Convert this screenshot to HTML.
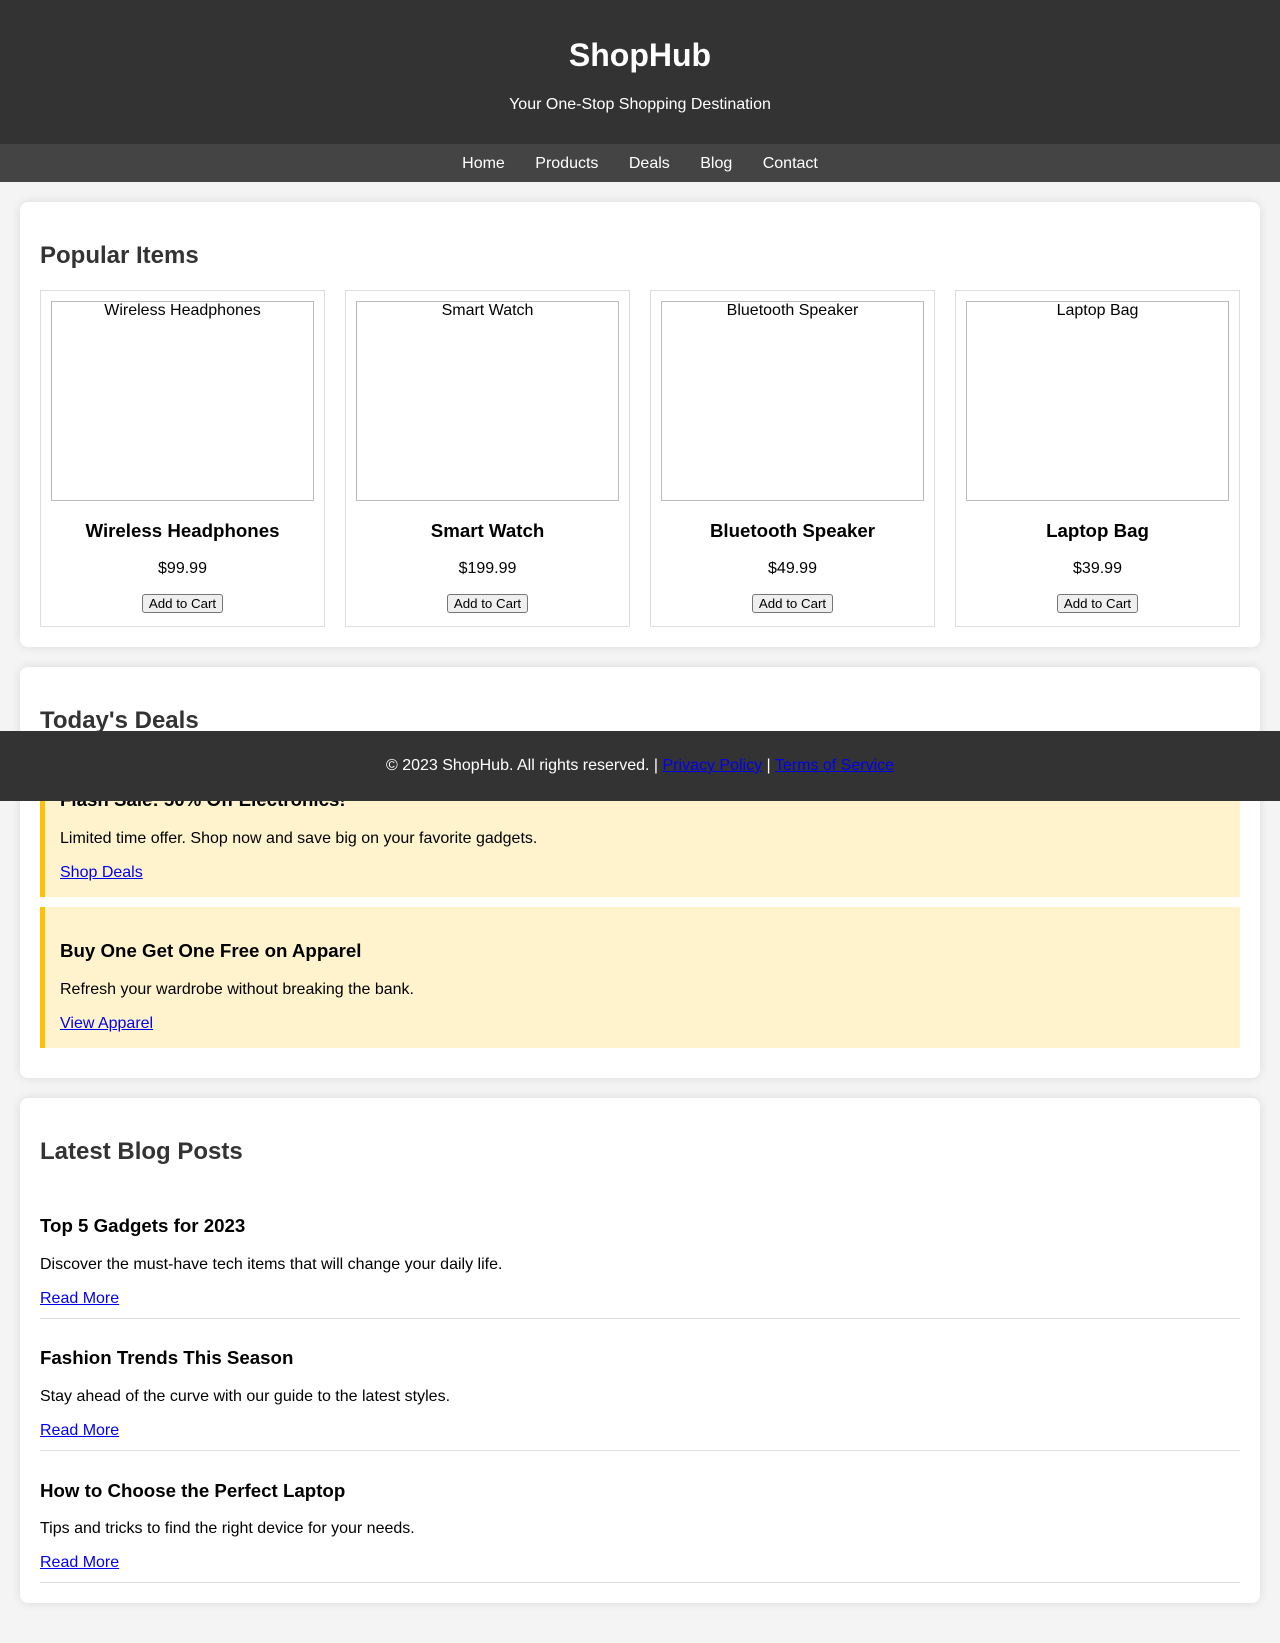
<!DOCTYPE html>
<html><head><meta charset="utf-8"><style>
body{margin:0;font-family:"Liberation Sans",Arial,sans-serif;font-size:16px;background:#f4f4f4;color:#000;position:relative;height:1622px;overflow:hidden}
header{background:#333;color:#fff;text-align:center;padding:16px 16px 0;height:128px}
header h1{margin:21.4px 0;font-size:32px;line-height:37px}
header p{margin:16px 0;line-height:18px}
nav{background:#444;height:38px;text-align:center;line-height:39px}
nav a{color:#fff;text-decoration:none;margin:0 13px}
main{padding:20px}
section{background:#fff;border-radius:8px;box-shadow:0 0 10px rgba(0,0,0,.1);padding:20px;margin-bottom:20px}
h2{color:#333;font-size:24px;margin:20px 0;line-height:28px}
.grid{display:grid;grid-template-columns:repeat(4,1fr);gap:20px}
.card{border:1px solid #ddd;padding:10px;text-align:center}
.img{height:198px;border:1px solid #bbb;line-height:18px;text-align:center}
.card h3{font-size:18.7px;margin:18.7px 0;line-height:22px}
.card p{margin:16px 0;line-height:18px}
button{font-family:inherit;font-size:13.3px;padding:1px 6px;border:1px solid #767676;border-radius:3px;background:#efefef;margin-bottom:3px}
.deal{background:#fff3cd;border-left:5px solid #ffc107;padding:15px;margin-bottom:10px}
.deal h3,.post h3{font-size:18.7px;margin:18.7px 0;line-height:22px}
.deal p,.post p{margin:16px 0;line-height:18px}
a{color:#00e;line-height:18px}
.post{border-bottom:1px solid #ddd;padding:10px 0}
footer{position:absolute;left:0;right:0;top:731px;height:70px;line-height:70px;background:#333;color:#fff;text-align:center}
</style></head><body>
<header><h1>ShopHub</h1><p>Your One-Stop Shopping Destination</p></header>
<nav><a>Home</a> <a>Products</a> <a>Deals</a> <a>Blog</a> <a>Contact</a></nav>
<main>
<section><h2>Popular Items</h2>
<div class="grid">
<div class="card"><div class="img">Wireless Headphones</div><h3>Wireless Headphones</h3><p>$99.99</p><button>Add to Cart</button></div>
<div class="card"><div class="img">Smart Watch</div><h3>Smart Watch</h3><p>$199.99</p><button>Add to Cart</button></div>
<div class="card"><div class="img">Bluetooth Speaker</div><h3>Bluetooth Speaker</h3><p>$49.99</p><button>Add to Cart</button></div>
<div class="card"><div class="img">Laptop Bag</div><h3>Laptop Bag</h3><p>$39.99</p><button>Add to Cart</button></div>
</div></section>
<section><h2>Today's Deals</h2>
<div class="deal"><h3>Flash Sale: 50% Off Electronics!</h3><p>Limited time offer. Shop now and save big on your favorite gadgets.</p><a href="#">Shop Deals</a></div>
<div class="deal"><h3>Buy One Get One Free on Apparel</h3><p>Refresh your wardrobe without breaking the bank.</p><a href="#">View Apparel</a></div>
</section>
<section><h2>Latest Blog Posts</h2>
<div class="post"><h3>Top 5 Gadgets for 2023</h3><p>Discover the must-have tech items that will change your daily life.</p><a href="#">Read More</a></div>
<div class="post"><h3>Fashion Trends This Season</h3><p>Stay ahead of the curve with our guide to the latest styles.</p><a href="#">Read More</a></div>
<div class="post"><h3>How to Choose the Perfect Laptop</h3><p>Tips and tricks to find the right device for your needs.</p><a href="#">Read More</a></div>
</section>
</main>
<footer>© 2023 ShopHub. All rights reserved. | <a href="#">Privacy Policy</a> | <a href="#">Terms of Service</a></footer>
</body></html>
